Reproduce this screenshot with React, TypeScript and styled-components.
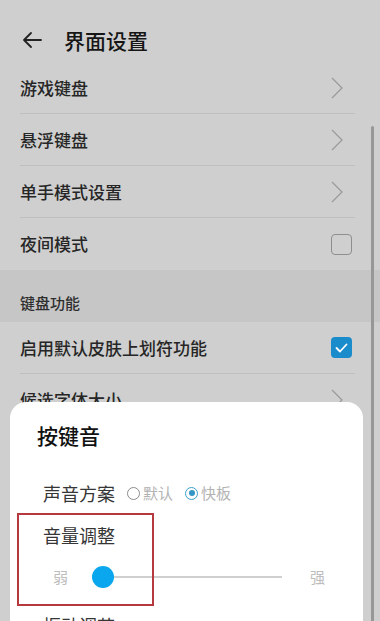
import React from "react";
import styled, { createGlobalStyle } from "styled-components";

const Global = createGlobalStyle`
  html, body { margin: 0; padding: 0; background: #cfcfcf; }
  body { font-family: "Noto Sans CJK SC", "Noto Sans", sans-serif; }
  * { box-sizing: border-box; }
`;

const Screen = styled.div`
  position: relative;
  width: 380px;
  height: 621px;
  overflow: hidden;
  background: #cfcfcf;
`;

const Header = styled.div`
  height: 62px;
  padding: 18px 0 0 22px;
  display: flex;
  align-items: center;
`;

const BackIcon = styled.svg`
  width: 20px;
  height: 18px;
  flex: none;
`;

const Title = styled.h1`
  margin: 0 0 0 22px;
  font-size: 21px;
  font-weight: 500;
  color: #161616;
  line-height: 28px;
`;

const Row = styled.div<{ $divider?: boolean }>`
  height: 52px;
  margin-left: 20px;
  width: 335px;
  display: flex;
  align-items: center;
  justify-content: space-between;
  border-bottom: ${(p) => (p.$divider ? "1px solid #bfbfbf" : "none")};
`;

const RowLabel = styled.span`
  font-size: 17px;
  font-weight: 500;
  color: #262626;
  line-height: 24px;
`;

const Chevron = styled.svg`
  width: 12px;
  height: 22px;
  margin-right: 12px;
`;

const Check = styled.div<{ $on?: boolean }>`
  width: 21px;
  height: 21px;
  margin-right: 3px;
  border-radius: 4px;
  border: ${(p) => (p.$on ? "none" : "1.5px solid #8e8e8e")};
  background: ${(p) => (p.$on ? "#1b8ccb" : "transparent")};
  display: flex;
  align-items: center;
  justify-content: center;
`;

const Section = styled.div`
  height: 52px;
  background: #c6c6c6;
  padding: 23px 0 0 20px;
  font-size: 15px;
  font-weight: 500;
  color: #2e2e2e;
  line-height: 20px;
`;

const Scrollbar = styled.div`
  position: absolute;
  left: 371px;
  top: 126px;
  width: 3px;
  height: 520px;
  border-radius: 2px;
  background: #979797;
`;

const Dialog = styled.div`
  position: absolute;
  left: 10px;
  top: 402px;
  width: 353px;
  height: 260px;
  background: #ffffff;
  border-radius: 16px;
  padding: 19px 20px 0 33px;
`;

const DialogTitle = styled.div`
  margin-left: -6px;
  font-size: 21px;
  font-weight: 500;
  color: #111111;
  line-height: 28px;
`;

const SchemeRow = styled.div`
  margin-top: 32px;
  display: flex;
  align-items: center;
  height: 24px;
`;

const Label = styled.span`
  font-size: 18px;
  color: #363636;
  line-height: 26px;
  white-space: nowrap;
`;

const Option = styled.span`
  display: flex;
  align-items: center;
  margin-left: 12px;
  font-size: 15px;
  color: #b3b3b3;
  line-height: 20px;
`;

const Radio = styled.span<{ $on?: boolean }>`
  width: 13px;
  height: 13px;
  border-radius: 50%;
  margin-right: 3px;
  border: 1.5px solid ${(p) => (p.$on ? "#3aa0cc" : "#8c8c8c")};
  display: flex;
  align-items: center;
  justify-content: center;
  &::after {
    content: "";
    display: ${(p) => (p.$on ? "block" : "none")};
    width: 6px;
    height: 6px;
    border-radius: 50%;
    background: #3396c4;
  }
`;

const VolumeLabel = styled(Label)`
  display: block;
  margin-top: 17px;
`;

const SliderRow = styled.div`
  margin-top: 14px;
  margin-left: 10px;
  height: 30px;
  display: flex;
  align-items: center;
`;

const SliderEnd = styled.span`
  font-size: 15px;
  color: #bdbdbd;
  line-height: 20px;
`;

const Track = styled.div`
  position: relative;
  margin: 0 28px 0 24px;
  width: 190px;
  height: 22px;
  display: flex;
  align-items: center;
  &::before {
    content: "";
    position: absolute;
    left: 11px;
    right: 0;
    top: 10px;
    height: 1.5px;
    background: #cfcfcf;
  }
`;

const Thumb = styled.div`
  position: relative;
  width: 22px;
  height: 22px;
  border-radius: 50%;
  background: #0ba7ee;
`;

const NextLabel = styled(Label)`
  display: block;
  margin-top: 20px;
`;

const Highlight = styled.div`
  position: absolute;
  left: 7px;
  top: 111px;
  width: 137px;
  height: 93px;
  border: 2px solid #b5393e;
`;

const ChevronIcon = () => (
  <Chevron viewBox="0 0 12 22">
    <polyline points="1,1 11,11 1,21" fill="none" stroke="#9b9b9b" strokeWidth="1.3" />
  </Chevron>
);

export default function App() {
  return (
    <>
      <Global />
      <Screen>
        <Header>
          <BackIcon viewBox="0 0 20 18">
            <path d="M19 9H2M9 2L2 9l7 7" fill="none" stroke="#222" strokeWidth="1.8" strokeLinecap="round" strokeLinejoin="round" />
          </BackIcon>
          <Title>界面设置</Title>
        </Header>
        <Row $divider>
          <RowLabel>游戏键盘</RowLabel>
          <ChevronIcon />
        </Row>
        <Row $divider>
          <RowLabel>悬浮键盘</RowLabel>
          <ChevronIcon />
        </Row>
        <Row $divider>
          <RowLabel>单手模式设置</RowLabel>
          <ChevronIcon />
        </Row>
        <Row>
          <RowLabel>夜间模式</RowLabel>
          <Check />
        </Row>
        <Section>键盘功能</Section>
        <Row $divider>
          <RowLabel>启用默认皮肤上划符功能</RowLabel>
          <Check $on>
            <svg width="13" height="10" viewBox="0 0 13 10">
              <polyline points="1.5,5 5,8.5 11.5,1.5" fill="none" stroke="#fff" strokeWidth="1.8" strokeLinecap="round" strokeLinejoin="round" />
            </svg>
          </Check>
        </Row>
        <Row>
          <RowLabel>候选字体大小</RowLabel>
          <ChevronIcon />
        </Row>
        <Scrollbar />
        <Dialog>
          <DialogTitle>按键音</DialogTitle>
          <SchemeRow>
            <Label>声音方案</Label>
            <Option>
              <Radio />
              默认
            </Option>
            <Option>
              <Radio $on />
              快板
            </Option>
          </SchemeRow>
          <VolumeLabel>音量调整</VolumeLabel>
          <SliderRow>
            <SliderEnd>弱</SliderEnd>
            <Track>
              <Thumb />
            </Track>
            <SliderEnd>强</SliderEnd>
          </SliderRow>
          <NextLabel>振动调节</NextLabel>
          <Highlight />
        </Dialog>
      </Screen>
    </>
  );
}
